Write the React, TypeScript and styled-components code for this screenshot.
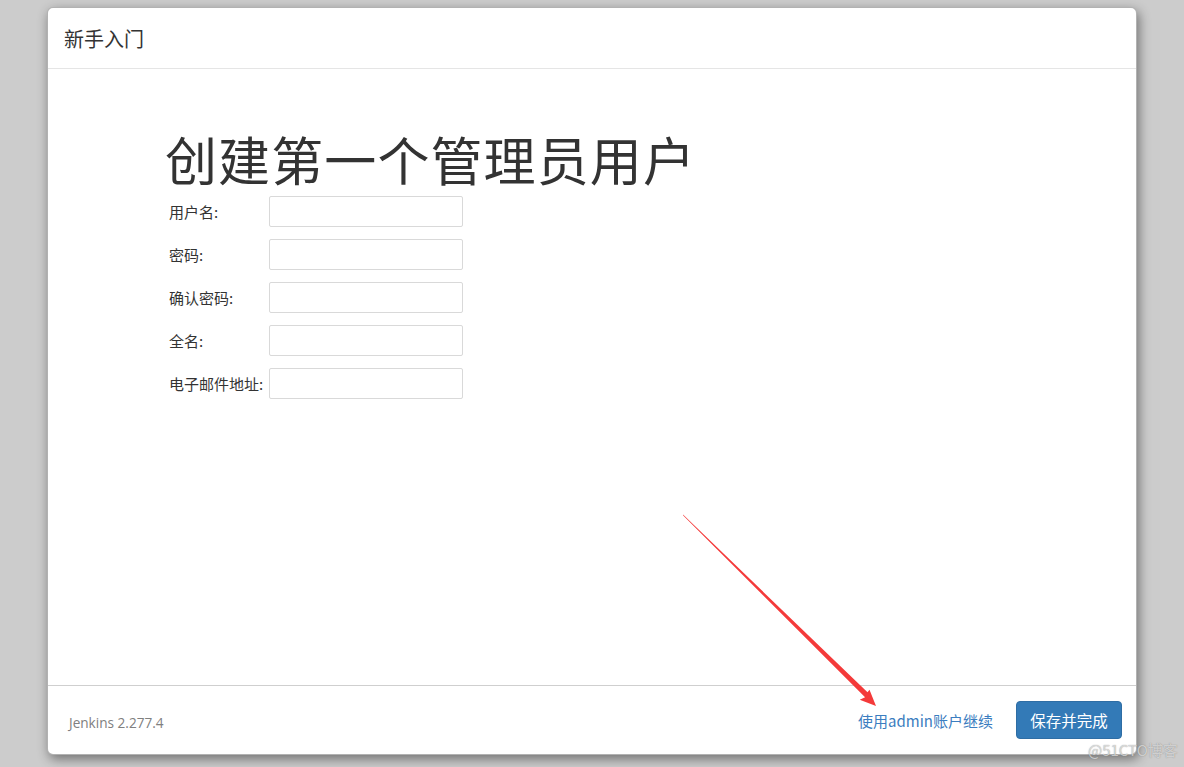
import React from "react";
import styled, { createGlobalStyle } from "styled-components";

const GlobalStyle = createGlobalStyle`
  html, body {
    margin: 0;
    padding: 0;
    background: #cccccc;
  }
  body {
    font-family: "Open Sans", "Noto Sans CJK SC", sans-serif;
    color: #333;
  }
`;

const fields = ["用户名:", "密码:", "确认密码:", "全名:", "电子邮件地址:"];

export default function App() {
  return (
    <>
      <GlobalStyle />
      <Page>
        <Modal>
          <Header>
            <HeaderTitle>新手入门</HeaderTitle>
          </Header>
          <Body>
            <Heading>创建第一个管理员用户</Heading>
            <Form>
              {fields.map((label) => (
                <Row key={label}>
                  <Label>{label}</Label>
                  <Input type={label.includes("密码") ? "password" : "text"} />
                </Row>
              ))}
            </Form>
          </Body>
          <Footer>
            <Version>Jenkins 2.277.4</Version>
            <Actions>
              <Link href="#">使用admin账户继续</Link>
              <PrimaryButton>保存并完成</PrimaryButton>
            </Actions>
          </Footer>
        </Modal>
        <Arrow width="1184" height="767" viewBox="0 0 1184 767">
          <polygon
            points="683,514.6 683.2,515.4 865.1,697.3 859.7,699.8 876,706 869.5,689.8 867.5,692.3"
            fill="#f43a3a"
          />
        </Arrow>
        <Watermark>@51CTO博客</Watermark>
      </Page>
    </>
  );
}

const Page = styled.div`
  position: relative;
  width: 1184px;
  height: 767px;
  padding: 7px 0 0 47px;
  box-sizing: border-box;
  overflow: hidden;
`;

const Modal = styled.div`
  width: 1090px;
  height: 748px;
  box-sizing: border-box;
  background: #fff;
  border: 1px solid rgba(0, 0, 0, 0.3);
  border-radius: 6px;
  box-shadow: 2px 4px 12px rgba(0, 0, 0, 0.45);
  display: flex;
  flex-direction: column;
`;

const Header = styled.div`
  height: 60px;
  flex: none;
  display: flex;
  align-items: center;
  padding: 0 16px;
  border-bottom: 1px solid #e5e5e5;
`;

const HeaderTitle = styled.h4`
  margin: 0;
  font-size: 20px;
  font-weight: 400;
  color: #333;
  font-family: "Noto Sans CJK SC", sans-serif;
`;

const Body = styled.div`
  flex: 1;
  padding: 60px 0 0 117px;
`;

const Heading = styled.h1`
  margin: 0 0 7px;
  font-size: 52px;
  line-height: 60px;
  font-weight: 400;
  color: #333;
  font-family: "Noto Sans CJK SC", sans-serif;
  letter-spacing: 1.1px;
`;

const Form = styled.div`
  display: flex;
  flex-direction: column;
  gap: 12px;
  padding-left: 4px;
`;

const Row = styled.div`
  display: flex;
  align-items: center;
`;

const Label = styled.label`
  width: 100px;
  flex: none;
  font-size: 15px;
  color: #333;
  font-family: "Noto Sans CJK SC", sans-serif;
  white-space: nowrap;
`;

const Input = styled.input`
  width: 194px;
  height: 31px;
  box-sizing: border-box;
  border: 1px solid #d9d9d9;
  border-radius: 2px;
  padding: 4px 8px;
  font-size: 14px;
  outline: none;
`;

const Footer = styled.div`
  height: 69px;
  flex: none;
  box-sizing: border-box;
  border-top: 1px solid #cfcfcf;
  display: flex;
  align-items: center;
  justify-content: space-between;
  padding: 0 14px 0 21px;
`;

const Version = styled.span`
  font-size: 13.6px;
  color: #808080;
  padding-top: 5px;
`;

const Actions = styled.div`
  display: flex;
  align-items: center;
  gap: 23px;
`;

const Link = styled.a`
  font-size: 15px;
  color: #3b7dc0;
  text-decoration: none;
  font-family: "Noto Sans CJK SC", sans-serif;
`;

const PrimaryButton = styled.button`
  width: 106px;
  height: 38px;
  border: 1px solid #2e6da4;
  border-radius: 4px;
  background: #337ab7;
  color: #fff;
  font-size: 15.5px;
  font-family: "Noto Sans CJK SC", sans-serif;
  cursor: pointer;
`;

const Arrow = styled.svg`
  position: absolute;
  left: 0;
  top: 0;
  pointer-events: none;
`;

const Watermark = styled.span`
  position: absolute;
  left: 1088px;
  top: 739px;
  font-size: 15px;
  color: rgba(240, 240, 240, 0.7);
  text-shadow: 0 0 1px rgba(90, 90, 90, 0.7);
  font-family: "Noto Sans CJK SC", sans-serif;
`;
